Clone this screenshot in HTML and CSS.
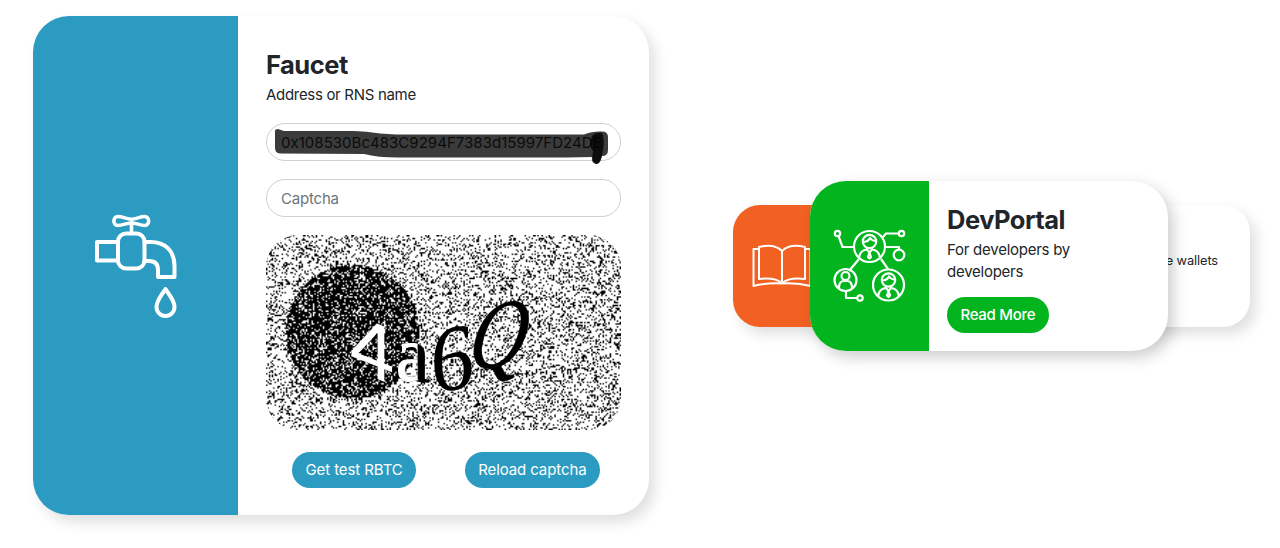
FILE: index.html
```html
<!DOCTYPE html>
<html lang="en">
<head>
<meta charset="utf-8">
<title>Faucet</title>
<link rel="stylesheet" href="styles.css">
</head>
<body>
<main class="page">
  <section class="card faucet">
    <div class="faucet-side">
      <svg class="tap" viewBox="80 200 110 130" fill="none" stroke="#fff" stroke-width="4" stroke-linejoin="round" stroke-linecap="round">
        <path stroke-width="3.600" d="M131.500 219.300C127 219 122 216.500 118 216.500c-5.500 0-5.500 9 0 9c4 0 9-2.500 13.500-2.800c4.500.3 9 2.800 13 2.800c5.500 0 5.500-9 0-9c-4 0-8.500 2.500-13 2.800zM131.500 223v10"/>
        <rect x="118" y="233.500" width="26.500" height="35" rx="8"/>
        <path d="M118 242H97v18.500H118M144.500 242h6c15 0 24 9 24 24v11H158v-7c0-6-3-9-9-9h-4.500M165.500 289c-3 5-9 11-9 18a9 9 0 0 0 18 0c0-7-6-13-9-18z"/>
      </svg>
    </div>
    <form class="faucet-form">
      <h1 class="title">Faucet</h1>
      <label class="lead" for="address">Address or RNS name</label>
      <div class="address">
        <input class="field" id="address" type="text" value="0x108530Bc483C9294F7383d15997FD24DE">
        <svg class="marker" viewBox="0 0 356 46">
          <path d="M9 8Q9 6 12 6L18 8H88Q100 8 114 10.500L130 11.500H318Q326 8 337 8.500Q342 9 342 14V27Q342 33 336 33Q334 42 330 41Q325 40 326 34L300 34.500H132Q112 34.500 98 31L14 30.500Q9 30 9 25Z" fill="#000" fill-opacity=".77"/>
          <path d="M326 13q4-4 10-3q3 6 1 17q-2 14-7 14q-5-2-3-13q-5-5-1-15z" fill="#000" fill-opacity=".78"/>
        </svg>
      </div>
      <input class="field" type="text" placeholder="Captcha">
      <div class="captcha">
        <canvas class="noise" id="noise" width="250" height="137"></canvas>
        <svg class="glyphs" viewBox="0 0 356 195">
          <defs><clipPath id="disc"><path d="M0 0H152V195H0z"/></clipPath></defs>
          <g fill="#000">
            <text class="g-serif" transform="matrix(.96 .07 0 1 130 145)" font-size="80" stroke-width="1">a</text>
            <text class="g-serif" transform="matrix(.92 -.12 0 1 165 158)" font-size="95" stroke-width="0">6</text>
            <text class="g-italic" transform="matrix(.88 -.15 -.14 1.06 201 137)" font-size="92" stroke-width=".5">Q</text>
          </g>
          <g clip-path="url(#disc)" fill="#fff">
            <text class="g-sans g-light" transform="matrix(1.06 .42 0 1.06 84 133)" font-size="76" stroke-width="0">4</text>
            <text class="g-serif g-light" transform="matrix(.96 .07 0 1 130 145)" font-size="80" stroke-width="1">a</text>
          </g>
        </svg>
      </div>
      <div class="actions">
        <button class="pill" type="button">Get test RBTC</button>
        <button class="pill" type="button">Reload captcha</button>
      </div>
    </form>
  </section>

  <section class="carousel">
    <div class="card back">
      <div class="back-side">
        <svg class="book" viewBox="750 240 64 50" fill="none" stroke="#fff" stroke-width="2" stroke-linejoin="round">
          <path d="M782 251c-6-6-15-6-23-4v32c8-1 17-1 23 4c6-5 15-5 23-4v-32c-8-2-17-2-23 4zv32M759 249h-5.500v37c12-3 20-3 28.500-2.500c8.500-.5 17-.5 28.500 2.500v-37H805"/>
        </svg>
      </div>
      <p class="back-text">e wallets</p>
    </div>
    <article class="card front">
      <div class="front-side">
        <svg class="network" viewBox="820 215 100 100" fill="none" stroke="#fff" stroke-width="2.200" stroke-linejoin="round">
          <circle cx="869.500" cy="246.500" r="15.500"/><circle cx="888.500" cy="285" r="15.500"/><circle cx="845.500" cy="280" r="11"/>
          <circle cx="837.500" cy="233.500" r="2.700"/><circle cx="901.500" cy="233.500" r="2.700"/><circle cx="899" cy="255" r="5.300"/><circle cx="860" cy="298" r="2.700"/>
          <path d="M838.500 236l4 11H854M882 238l4-4.500h13M885 247h14v3M859 259l-10 12M881 259l7 10M846 291v7h11"/>
          <g id="person"><circle cx="869.500" cy="241.500" r="6.700"/><path d="M863 242c4 0 6-2 7-4q2 3 6 3M859 258q1-8 8-8.500l2.500 3l2.500-3q7 .5 8 8.500M867 250v-3m5 3v-3M869.500 253l-1.500 4l1.500 1.500l1.500-1.500z"/></g>
          <use href="#person" x="19" y="38.500"/>
          <circle cx="845.500" cy="276" r="4"/><path d="M839 288q0-7 5-7h3q5 0 5 7"/>
        </svg>
      </div>
      <div class="front-body">
        <h2 class="title">DevPortal</h2>
        <p class="lead front-lead">For developers by developers</p>
        <button class="pill green" type="button">Read More</button>
      </div>
    </article>
  </section>
</main>
<script src="noise.js"></script>
</body>
</html>
```

FILE: styles.css
```css
* { box-sizing: border-box; }
body { margin: 0; background: #fff; color: #212529; font-family: Inter, "Liberation Sans", sans-serif; }
h1, h2, p { margin: 0; }
.page { display: flex; height: 548px; padding: 16px 30px 0 33px; justify-content: space-between; align-items: flex-start; overflow: hidden; }
.card { display: flex; background: #fff; border-radius: 36px; box-shadow: 6px 7px 14px rgba(0, 0, 0, .13); }
.faucet { width: 616px; height: 499px; overflow: hidden; }
.faucet-side { width: 205px; background: #2b9bc1; padding: 184px 0 0 47px; }
.tap { display: block; width: 110px; height: 130px; }
.faucet-form { flex: 1; padding: 32px 28px 0; display: flex; flex-direction: column; }
.title { font-size: 25.500px; line-height: 33px; font-weight: 700; letter-spacing: -.5px; }
.lead { font-size: 15px; letter-spacing: -.15px; line-height: 22px; }
.faucet .lead { margin-top: 3px; letter-spacing: -.31px; }
.address { position: relative; margin: 17px 0 18px; height: 38px; }
.field { display: block; width: 100%; height: 38px; border: 1px solid #ced0d2; border-radius: 19px; padding: 0 14px; background: #fff; color: #32363a; font: 15px Inter, "Liberation Sans", sans-serif; letter-spacing: -.2px; outline: none; }
.address .field { letter-spacing: .03px; }
.field::placeholder { color: #6c757d; opacity: 1; }
.marker { position: absolute; left: 0; top: 0; width: 356px; height: 46px; filter: blur(.5px); }
.captcha { position: relative; margin-top: 18px; height: 195px; border-radius: 32px; overflow: hidden; }
.noise { display: block; width: 100%; height: 100%; }
.glyphs { position: absolute; left: 0; top: 0; width: 100%; height: 100%; stroke: #000; }
.g-sans { font-family: "Liberation Sans", sans-serif; }
.g-serif { font-family: "Liberation Serif", serif; }
.g-italic { font-family: "Liberation Serif", serif; font-style: italic; }
.g-light { stroke: #fff; }
.actions { display: flex; justify-content: space-between; margin-top: 22px; padding: 0 21px 0 26px; }
.pill { height: 36px; border: 0; border-radius: 18px; padding: 0 13.500px; background: #2b9bc1; color: #fff; font: 15px/36px Inter, "Liberation Sans", sans-serif; letter-spacing: -.1px; white-space: nowrap; }
.green { background: #02b51f; font-weight: 500; letter-spacing: -.3px; }
.carousel { position: relative; width: 517px; margin-top: 189px; }
.back { height: 122px; overflow: hidden; border-radius: 27px; justify-content: space-between; align-items: center; }
.back-side { width: 90px; height: 100%; background: #f26122; padding: 35px 0 0 17px; }
.book { display: block; width: 64px; height: 50px; }
.back-text { margin-right: 32px; padding-bottom: 10px; font-size: 12.800px; line-height: 18px; letter-spacing: -.1px; }
.front { position: absolute; left: 77px; top: -24px; width: 358px; height: 170px; overflow: hidden; box-shadow: 5px 6px 15px rgba(0, 0, 0, .2); }
.front-side { width: 119px; background: #02b51f; padding: 34px 0 0 10px; }
.network { display: block; width: 100px; height: 100px; }
.front-body { padding: 22px 18px 0; }
.front-lead { width: 150px; margin: 3px 0 14px; letter-spacing: -.25px; }
```

FILE: noise.js
```js
const canvas = document.getElementById('noise');
const ctx = canvas.getContext('2d');
const image = ctx.createImageData(canvas.width, canvas.height);
let seed = 4217;
function random() {
  seed = (seed + 0x6d2b79f5) | 0;
  let t = Math.imul(seed ^ (seed >>> 15), 1 | seed);
  t = (t + Math.imul(t ^ (t >>> 7), 61 | t)) ^ t;
  return ((t ^ (t >>> 14)) >>> 0) / 4294967296;
}
for (let y = 0; y < canvas.height; y++) {
  for (let x = 0; x < canvas.width; x++) {
    const inside = Math.hypot(x - 60.500, y - 67.500) < 47;
    const speck = random() < 0.23;
    const value = inside === speck ? 255 : 0;
    const i = (y * canvas.width + x) * 4;
    image.data[i] = image.data[i + 1] = image.data[i + 2] = value;
    image.data[i + 3] = 255;
  }
}
ctx.putImageData(image, 0, 0);
```
